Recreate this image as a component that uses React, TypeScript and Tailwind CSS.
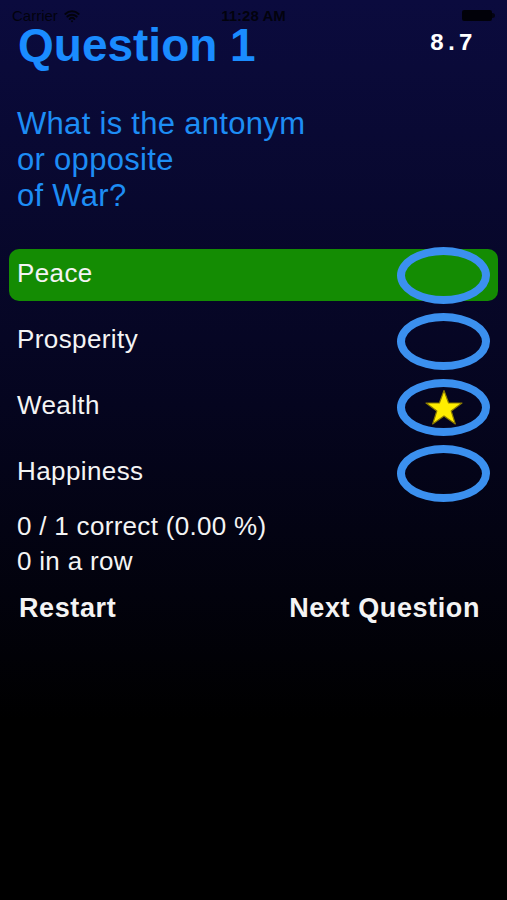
import { Wifi } from 'lucide-react'

const options = [
  { label: 'Peace', selected: true, star: false },
  { label: 'Prosperity', selected: false, star: false },
  { label: 'Wealth', selected: false, star: true },
  { label: 'Happiness', selected: false, star: false },
]

function Star() {
  return (
    <svg width="40" height="37" viewBox="0 0 40 37">
      <polygon
        points="20,1.5 24.6,14 38,14 27.2,22 31.3,35 20,27 8.7,35 12.8,22 2,14 15.4,14"
        fill="#ffee00"
        stroke="#8a7a00"
        strokeWidth="1.2"
        strokeLinejoin="round"
      />
    </svg>
  )
}

function StatusBar() {
  return (
    <div className="absolute inset-x-0 top-[8px] flex h-[15px] items-center justify-between px-3 text-[15px] leading-[15px] text-black/80">
      <div className="flex items-center gap-1.5">
        <span>Carrier</span>
        <Wifi className="h-4 w-4" strokeWidth={3} />
      </div>
      <span className="absolute left-1/2 -translate-x-1/2 font-bold">11:28 AM</span>
      <div className="flex items-center">
        <div className="h-[11px] w-[30px] rounded-[2px] bg-black/85" />
        <div className="h-[5px] w-[3px] rounded-r-sm bg-black/70" />
      </div>
    </div>
  )
}

export default function App() {
  return (
    <div className="relative min-h-screen bg-[linear-gradient(180deg,#0b0b3e_0%,#05051f_45%,#000000_80%)] font-['Liberation_Sans',Arial,sans-serif]">
      <StatusBar />

      {/* Header */}
      <div className="flex items-start justify-between pt-[27px] pr-[34px] pl-[18px]">
        <h1 className="text-[46px] leading-[36px] font-bold text-[#1a8cff]">Question 1</h1>
        <span className="mt-[5px] font-['Liberation_Mono',monospace] text-[24px] leading-[24px] font-bold text-white">
          8.7
        </span>
      </div>

      {/* Question */}
      <p className="mt-[43px] pl-[17px] text-[31px] leading-[36px] tracking-[0.3px] text-[#1d8df5]">
        What is the antonym
        <br />
        or opposite
        <br />
        of War?
      </p>

      {/* Answers */}
      <div className="mt-[35px] flex flex-col gap-[14px] px-[9px]">
        {options.map((o) => (
          <div
            key={o.label}
            className={`flex h-[52px] items-center justify-between rounded-[10px] pl-2 pr-2 ${
              o.selected ? 'bg-[#148c03]' : ''
            }`}
          >
            <span className="-mt-[3px] text-[26px] tracking-[0.4px] text-[#f4f4f4]">{o.label}</span>
            <div className="flex h-[57px] w-[93px] shrink-0 items-center justify-center rounded-[50%] border-[8px] border-[#3b90ef]">
              {o.star && <Star />}
            </div>
          </div>
        ))}
      </div>

      {/* Score */}
      <div className="mt-[10px] pl-[17px] text-[26px] leading-[35px] tracking-[0.3px] text-[#f4f4f4]">
        <p>0 / 1 correct (0.00 %)</p>
        <p>0 in a row</p>
      </div>

      {/* Actions */}
      <div className="mt-[12px] flex justify-between pr-[27px] pl-[19px] text-[27px] leading-[35px] font-bold tracking-[0.6px] text-[#f4f4f4]">
        <button>Restart</button>
        <button>Next Question</button>
      </div>
    </div>
  )
}
